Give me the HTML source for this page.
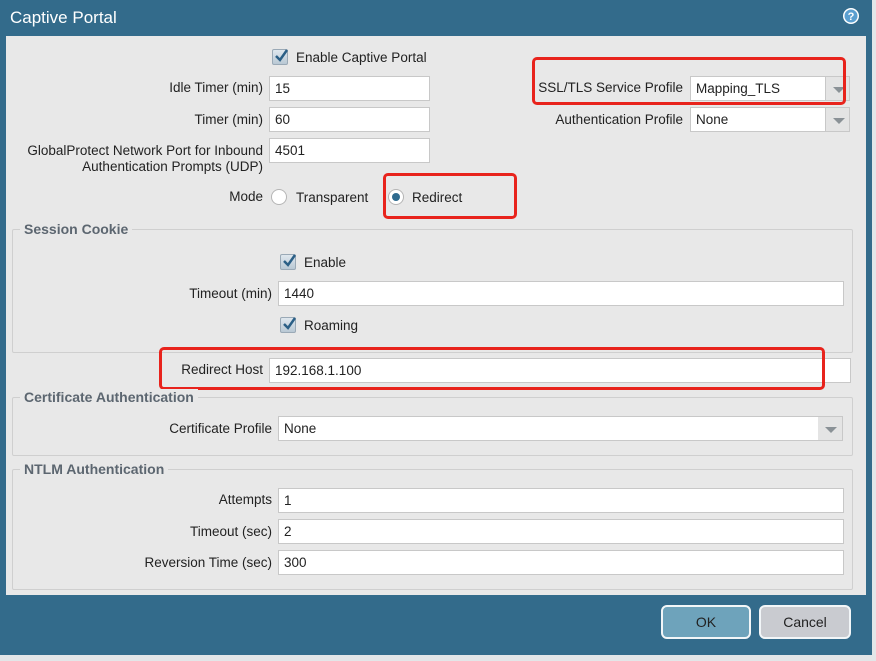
<!DOCTYPE html>
<html><head><meta charset="utf-8"><style>
*{box-sizing:border-box;margin:0;padding:0}
body{width:876px;height:661px;position:relative;overflow:hidden;background:#e3e6e8;font-family:"Liberation Sans",Tahoma,sans-serif;font-size:13.5px;color:#222}
.a{position:absolute}
.lbl{position:absolute;text-align:right;white-space:nowrap;line-height:16px}
.in{position:absolute;background:#fff;border:1px solid #c8c8c8;height:25px;padding-left:5px;line-height:23px;font-size:13.5px}
.arr{position:absolute;background:#e4e4e4;border:1px solid #c8c8c8;border-left:none;height:25px}
.arr:after{content:"";position:absolute;left:7px;top:10px;border-left:6px solid transparent;border-right:6px solid transparent;border-top:6px solid #8a9196}
.cb{position:absolute;width:16px;height:16px;background:linear-gradient(#dfe7ee,#b9c8d4);border:1px solid #9aa9b6;border-radius:2px}
.cb svg{position:absolute;left:1px;top:-1px}
.fs{position:absolute;border:1px solid #cfcfcf;border-radius:2px}
.lg{position:absolute;font-weight:bold;color:#5c6670;background:#e8e8e8;padding:0 4px;line-height:16px;font-size:14px}
.red{position:absolute;border:3px solid #e8231c;border-radius:5px}
.rad{position:absolute;width:16px;height:16px;border-radius:50%;background:#fff;border:1px solid #b5b5b5}
</style></head><body>
<div class="a" style="left:0;top:0;width:872px;height:655px;background:#336b8b"></div>
<div class="a" style="left:10px;top:7px;color:#fff;font-size:17px;line-height:22px">Captive Portal</div>
<svg class="a" style="left:842px;top:7px" width="18" height="18"><circle cx="9" cy="9" r="8" fill="#fff"/><circle cx="9" cy="9" r="6.5" fill="#5a9fd0"/><text x="9" y="13" font-size="11" font-weight="bold" fill="#fff" text-anchor="middle" font-family="Liberation Sans">?</text></svg>
<div class="a" style="left:6px;top:36px;width:860px;height:559px;background:#e8e8e8"></div>

<div class="cb" style="left:272px;top:49px"><svg width="14" height="14"><path d="M2 7 L6 11 L13 1" stroke="#2b5f86" stroke-width="2.5" fill="none"/></svg></div>
<div class="lbl" style="left:296px;top:50px">Enable Captive Portal</div>

<div class="lbl" style="right:613px;top:80px">Idle Timer (min)</div>
<div class="in" style="left:269px;top:76px;width:161px">15</div>
<div class="lbl" style="right:613px;top:112px">Timer (min)</div>
<div class="in" style="left:269px;top:107px;width:161px">60</div>
<div class="lbl" style="right:613px;top:143px">GlobalProtect Network Port for Inbound<br>Authentication Prompts (UDP)</div>
<div class="in" style="left:269px;top:138px;width:161px">4501</div>
<div class="lbl" style="right:613px;top:189px">Mode</div>
<div class="rad" style="left:271px;top:189px"></div>
<div class="lbl" style="left:296px;top:190px">Transparent</div>
<div class="rad" style="left:388px;top:189px"><div class="a" style="left:3px;top:3px;width:8px;height:8px;border-radius:50%;background:#2e6a8e"></div></div>
<div class="lbl" style="left:412px;top:190px">Redirect</div>
<div class="red" style="left:383px;top:173px;width:134px;height:46px"></div>

<div class="lbl" style="right:193px;top:80px">SSL/TLS Service Profile</div>
<div class="in" style="left:690px;top:76px;width:136px">Mapping_TLS</div>
<div class="arr" style="left:826px;top:76px;width:24px"></div>
<div class="lbl" style="right:193px;top:112px">Authentication Profile</div>
<div class="in" style="left:690px;top:107px;width:136px">None</div>
<div class="arr" style="left:826px;top:107px;width:24px"></div>
<div class="red" style="left:532px;top:57px;width:314px;height:48px"></div>

<div class="fs" style="left:12px;top:229px;width:841px;height:124px"></div>
<div class="lg" style="left:20px;top:221px">Session Cookie</div>
<div class="cb" style="left:280px;top:254px"><svg width="14" height="14"><path d="M2 7 L6 11 L13 1" stroke="#2b5f86" stroke-width="2.5" fill="none"/></svg></div>
<div class="lbl" style="left:304px;top:255px">Enable</div>
<div class="lbl" style="right:604px;top:286px">Timeout (min)</div>
<div class="in" style="left:278px;top:281px;width:566px">1440</div>
<div class="cb" style="left:280px;top:317px"><svg width="14" height="14"><path d="M2 7 L6 11 L13 1" stroke="#2b5f86" stroke-width="2.5" fill="none"/></svg></div>
<div class="lbl" style="left:304px;top:318px">Roaming</div>

<div class="lbl" style="right:613px;top:362px">Redirect Host</div>
<div class="in" style="left:269px;top:358px;width:582px">192.168.1.100</div>
<div class="red" style="left:159px;top:347px;width:666px;height:43px"></div>

<div class="fs" style="left:12px;top:397px;width:841px;height:59px"></div>
<div class="lg" style="left:20px;top:389px">Certificate Authentication</div>
<div class="lbl" style="right:604px;top:421px">Certificate Profile</div>
<div class="in" style="left:278px;top:416px;width:541px">None</div>
<div class="arr" style="left:818px;top:416px;width:25px"></div>

<div class="fs" style="left:12px;top:469px;width:841px;height:121px"></div>
<div class="lg" style="left:20px;top:461px">NTLM Authentication</div>
<div class="lbl" style="right:604px;top:492px">Attempts</div>
<div class="in" style="left:278px;top:488px;width:566px">1</div>
<div class="lbl" style="right:604px;top:524px">Timeout (sec)</div>
<div class="in" style="left:278px;top:519px;width:566px">2</div>
<div class="lbl" style="right:604px;top:555px">Reversion Time (sec)</div>
<div class="in" style="left:278px;top:550px;width:566px">300</div>

<div class="a" style="left:661px;top:605px;width:90px;height:34px;background:#6ea3bb;border:2px solid #f2f6f8;border-radius:6px;text-align:center;line-height:30px;font-size:14px">OK</div>
<div class="a" style="left:759px;top:605px;width:92px;height:34px;background:#c9cbd0;border:2px solid #f2f6f8;border-radius:6px;text-align:center;line-height:30px;font-size:14px">Cancel</div>
</body></html>
